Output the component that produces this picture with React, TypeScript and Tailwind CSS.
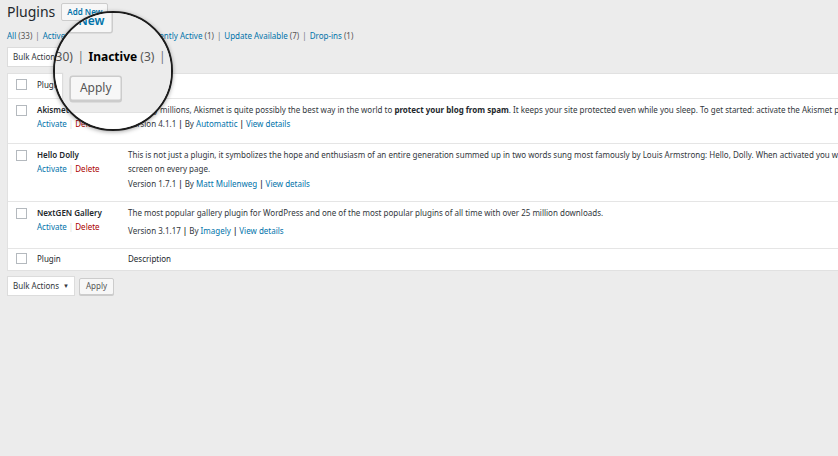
import React from "react";

function Checkbox() {
  return <div className="w-[11px] h-[11px] border border-[#b4b9be] bg-white shrink-0" />;
}

function Sep({ light }: { light?: boolean }) {
  return <span className={light ? "text-[#72777c] px-[3px]" : "text-[#23282d] font-semibold px-[2px]"}>|</span>;
}

function BulkRow() {
  return (
    <div className="flex items-center h-[20px]">
      <div className="w-[68px] h-[20px] bg-white border border-[#dcdcdc] flex items-center justify-between pl-[5px] pr-[5px] text-[8px] text-[#32373c]">
        <span>Bulk Actions</span>
        <span className="text-[6px]">▼</span>
      </div>
      <div className="ml-[4px] w-[35px] h-[17px] bg-[#f7f7f7] border border-[#cccccc] rounded-[2px] flex items-center justify-center text-[8px] text-[#555] shadow-[0_1px_0_#ccc]">
        Apply
      </div>
    </div>
  );
}

type Row = {
  name: string;
  h: string;
  desc: React.ReactNode[];
  version: string;
  author: string;
  vmt: string;
};

const rows: Row[] = [
  {
    name: "Akismet Anti-Spam",
    h: "h-[45px]",
    desc: [
      <>
        Used by millions, Akismet is quite possibly the best way in the world to{" "}
        <b className="font-bold text-[#23282d]">protect your blog from spam</b>. It keeps your site protected even while you sleep. To get started: activate the Akismet plugin and then go to your Akismet Settings page to set up your API key.
      </>,
    ],
    version: "4.1.1",
    author: "Automattic",
    vmt: "mt-0",
  },
  {
    name: "Hello Dolly",
    h: "h-[58px]",
    desc: [
      <>This is not just a plugin, it symbolizes the hope and enthusiasm of an entire generation summed up in two words sung most famously by Louis Armstrong: Hello, Dolly. When activated you will randomly see a lyric from Hello, Dolly in the upper right of your admin</>,
      <>screen on every page.</>,
    ],
    version: "1.7.1",
    author: "Matt Mullenweg",
    vmt: "mt-[1px]",
  },
  {
    name: "NextGEN Gallery",
    h: "h-[47px]",
    desc: [<>The most popular gallery plugin for WordPress and one of the most popular plugins of all time with over 25 million downloads.</>],
    version: "3.1.17",
    author: "Imagely",
    vmt: "mt-[4px]",
  },
];

function Page() {
  return (
    <div className="w-[1400px] h-[470px] bg-[#ececec] pl-[7px] pt-[3px] font-['Noto_Sans',sans-serif] text-[#23282d]">
      <div className="flex items-center h-[18px]">
        <span className="text-[14px] leading-[18px] text-[#23282d]">Plugins</span>
        <div className="ml-[6px] h-[18px] px-[5px] bg-[#f7f7f7] border border-[#cccccc] rounded-[2px] flex items-center text-[8px] font-semibold text-[#0073aa]">
          Add New
        </div>
      </div>

      <div className="mt-[8px] h-[14px] leading-[14px] text-[8px] whitespace-nowrap">
        <span className="text-[#0073aa]">All</span> <span className="text-[#555]">(33)</span>
        <Sep light />
        <span className="text-[#0073aa]">Active</span> <span className="text-[#555]">(30)</span>
        <Sep light />
        <span className="font-bold text-[#000]">Inactive</span> <span className="text-[#555]">(3)</span>
        <Sep light />
        <span className="text-[#0073aa]">Recently Active</span> <span className="text-[#555]">(1)</span>
        <Sep light />
        <span className="text-[#0073aa]">Update Available</span> <span className="text-[#555]">(7)</span>
        <Sep light />
        <span className="text-[#0073aa]">Drop-ins</span> <span className="text-[#555]">(1)</span>
      </div>

      <div className="mt-[4px]">
        <BulkRow />
      </div>

      <div className="mt-[6px] w-[1300px] bg-white border border-[#e1e1e1] text-[8px] leading-[14px]">
        <div className="flex h-[24px] pt-[4px]">
          <div className="w-[29px] pl-[8px] pt-[1px]">
            <Checkbox />
          </div>
          <div className="w-[91px]">Plugin</div>
          <div>Description</div>
        </div>
        {rows.map((r) => (
          <div key={r.name} className={`flex border-t border-[#e5e5e5] pt-[4px] ${r.h}`}>
            <div className="w-[29px] pl-[8px] pt-[2px]">
              <Checkbox />
            </div>
            <div className="w-[91px]">
              <div className="font-semibold text-[#23282d] whitespace-nowrap">{r.name}</div>
              <div className="whitespace-nowrap">
                <span className="text-[#0073aa]">Activate</span>
                <span className="text-[#dddddd] px-[2px]">|</span>
                <span className="text-[#a00]">Delete</span>
              </div>
            </div>
            <div className="whitespace-nowrap text-[#32373c]">
              {r.desc.map((d, i) => (
                <div key={i}>{d}</div>
              ))}
              <div className={`${r.vmt} text-[#32373c]`}>
                Version {r.version}
                <Sep />
                By <span className="text-[#0073aa]">{r.author}</span>
                <Sep />
                <span className="text-[#0073aa]">View details</span>
              </div>
            </div>
          </div>
        ))}
        <div className="flex border-t border-[#e5e5e5] h-[22px] pt-[3px]">
          <div className="w-[29px] pl-[8px] pt-[1px]">
            <Checkbox />
          </div>
          <div className="w-[91px]">Plugin</div>
          <div>Description</div>
        </div>
      </div>

      <div className="mt-[5px]">
        <BulkRow />
      </div>
    </div>
  );
}

export default function App() {
  return (
    <div className="relative w-[838px] h-[456px] overflow-hidden bg-[#ececec]">
      <Page />
      <div className="absolute left-[53px] top-[11px] w-[120px] h-[120px] rounded-full overflow-hidden border-2 border-[#1c1c1c] shadow-[0_1px_4px_rgba(0,0,0,0.35)] bg-[#ececec]">
        <div className="absolute left-[-104.5px] top-[-11px] scale-150 origin-top-left pointer-events-none">
          <Page />
        </div>
      </div>
    </div>
  );
}
